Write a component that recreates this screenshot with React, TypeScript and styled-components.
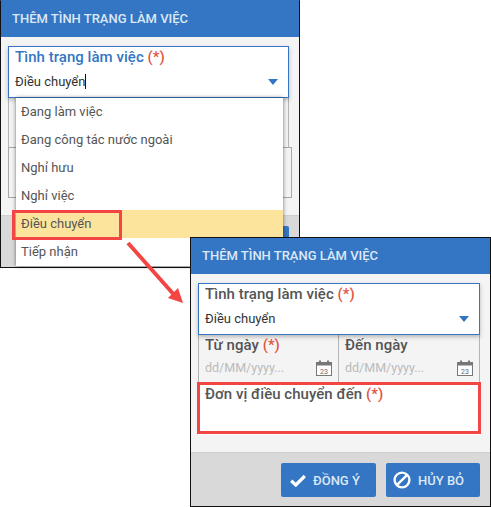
import * as React from 'react'
import styled, { createGlobalStyle } from 'styled-components'

const GlobalStyle = createGlobalStyle`
  html, body {
    margin: 0;
    padding: 0;
    background: #fff;
  }
  body {
    font-family: Roboto, "Liberation Sans", sans-serif;
  }
`

const Canvas = styled.div`
  position: relative;
  width: 491px;
  height: 507px;
  overflow: hidden;
  background: #fff;
`

const Window = styled.div<{ $left: number; $top: number; $w: number; $h: number; $flushTop?: boolean }>`
  position: absolute;
  left: ${(p) => p.$left}px;
  top: ${(p) => p.$top}px;
  width: ${(p) => p.$w}px;
  height: ${(p) => p.$h}px;
  box-sizing: border-box;
  border: 1px solid #111;
  border-top-color: ${(p) => (p.$flushTop ? '#3476c3' : '#111')};
  background: #f4f4f4;
  display: flex;
  flex-direction: column;
  overflow: hidden;
`

const TitleBar = styled.div`
  flex: none;
  height: 36px;
  background: #3476c3;
  color: #dce8f6;
  font-size: 13px;
  font-weight: 500;
  line-height: 36px;
  padding-left: 11px;
`

const Body = styled.div`
  flex: none;
  height: 178px;
  box-sizing: border-box;
  padding: 9px 10px 0 7px;
`

const Footer = styled.div`
  flex: 1;
  box-sizing: border-box;
  background: #d9d9d9;
  border-top: 1px solid #cfcfcf;
  display: flex;
  justify-content: flex-end;
  align-items: flex-start;
  gap: 10px;
  padding: 10px 10px 0 0;
`

const SelectBox = styled.div`
  position: relative;
  box-sizing: border-box;
  height: 52px;
  background: #fff;
  border: 1px solid #3476c3;
  padding: 2px 6px 0;
  box-shadow: 0 2px 4px rgba(0, 0, 0, 0.25);
`

const FieldLabel = styled.div<{ $active?: boolean }>`
  font-size: 15px;
  font-weight: 500;
  line-height: 17px;
  letter-spacing: 0.04px;
  color: ${(p) => (p.$active ? '#3476c3' : '#555')};
`

const Required = styled.span`
  color: #e2543f;
`

const SelectValue = styled.div`
  display: flex;
  align-items: center;
  justify-content: space-between;
  font-size: 13px;
  color: #333;
  margin-top: 8px;
  line-height: 16px;
  padding-right: 4px;
`

const Caret = styled.span`
  display: block;
  width: 0;
  height: 0;
  border-left: 5px solid transparent;
  border-right: 5px solid transparent;
  border-top: 6px solid #3476c3;
`

const TextCursor = styled.span`
  display: inline-block;
  width: 1px;
  height: 15px;
  background: #111;
  vertical-align: -3px;
`

const DateRow = styled.div`
  display: grid;
  grid-template-columns: 140px 1fr;
  height: 49px;
  box-sizing: border-box;
  border-left: 1px solid #b4b4b4;
  border-right: 1px solid #b4b4b4;
`

const DateField = styled.div<{ $divider?: boolean }>`
  padding: 2px 6px 0;
  border-right: ${(p) => (p.$divider ? '1px solid #b4b4b4' : 'none')};
`

const DateInput = styled.div`
  display: flex;
  align-items: center;
  justify-content: space-between;
  margin-top: 6px;
  font-size: 12.5px;
  line-height: 16px;
  color: #bbb;
`

const TargetField = styled.div`
  position: relative;
  box-sizing: border-box;
  height: 51px;
  margin-right: -3px;
  padding: 1px 6px 0;
  border: 1px solid #a8a8a8;
  background: #f4f4f4;
`

const TargetSurface = styled(TargetField)`
  margin-right: -1px;
  border-color: transparent;
  background: #fff;
`

const TargetMark = styled.div`
  position: absolute;
  left: -2px;
  right: -1px;
  top: -3px;
  bottom: 0;
  border: 3px solid #f44545;
`

const ActionButton = styled.button`
  height: 34px;
  border: none;
  border-radius: 2px;
  background: #3476c3;
  color: #dce8f6;
  font-family: inherit;
  font-size: 13px;
  font-weight: 500;
  display: flex;
  align-items: center;
  gap: 7px;
`

const ConfirmButton = styled(ActionButton)`
  width: 95px;
  padding: 0 0 0 9px;
`

const CancelButton = styled(ActionButton)`
  width: 94px;
  padding: 0 0 0 7px;
`

const DropdownList = styled.ul`
  position: absolute;
  left: 16px;
  top: 98px;
  width: 267px;
  margin: 0;
  padding: 0;
  list-style: none;
  background: #fff;
  box-shadow: 0 0 4px rgba(0, 0, 0, 0.55);
`

const DropdownItem = styled.li<{ $selected?: boolean }>`
  height: 28px;
  line-height: 28px;
  padding-left: 5px;
  font-size: 13px;
  color: #555;
  background: ${(p) => (p.$selected ? '#fde49d' : 'transparent')};
`

const CalloutBox = styled.div`
  position: absolute;
  left: 12px;
  top: 210px;
  width: 110px;
  height: 30px;
  box-sizing: border-box;
  border: 3px solid #f44545;
`

const ArrowOverlay = styled.svg`
  position: absolute;
  left: 120px;
  top: 235px;
`

const CalendarIcon = () => (
  <svg width="16" height="16" viewBox="0 0 16 16" fill="none">
    <rect x="0.5" y="2.5" width="15" height="13" fill="#fff" stroke="#777" />
    <rect x="0.5" y="2.5" width="15" height="3" fill="#777" />
    <rect x="3" y="0.5" width="2" height="3" fill="#777" />
    <rect x="11" y="0.5" width="2" height="3" fill="#777" />
    <text x="8" y="13.5" fontSize="7" textAnchor="middle" fill="#666" fontFamily="Roboto, sans-serif">23</text>
  </svg>
)

const CheckIcon = () => (
  <svg width="16" height="13" viewBox="0 0 16 13">
    <path d="M1.2 6.8 L5.8 11 L14.8 2" fill="none" stroke="#fff" strokeWidth="3.2" />
  </svg>
)

const BanIcon = () => (
  <svg width="18" height="18" viewBox="0 0 18 18">
    <circle cx="9" cy="9" r="7.4" fill="none" stroke="#fff" strokeWidth="2.4" />
    <path d="M14.2 3.8 L3.8 14.2" stroke="#fff" strokeWidth="2.4" />
  </svg>
)

const options = ['Đang làm việc', 'Đang công tác nước ngoài', 'Nghỉ hưu', 'Nghỉ việc', 'Điều chuyển', 'Tiếp nhận']

const App: React.FC = () => (
  <Canvas>
    <GlobalStyle />
    {/* the fields behind the open list only show their borders */}
    <Window $left={0} $top={0} $w={300} $h={268} $flushTop>
      <TitleBar>THÊM TÌNH TRẠNG LÀM VIỆC</TitleBar>
      <Body>
        <SelectBox>
          <FieldLabel $active>
            Tình trạng làm việc <Required>(*)</Required>
          </FieldLabel>
          <SelectValue>
            <span>
              Điều chuyển
              <TextCursor />
            </span>
            <Caret />
          </SelectValue>
        </SelectBox>
        <DateRow />
        <TargetField />
      </Body>
      <Footer>
        <CancelButton />
      </Footer>
    </Window>
    <DropdownList>
      {options.map((o) => (
        <DropdownItem key={o} $selected={o === 'Điều chuyển'}>
          {o}
        </DropdownItem>
      ))}
    </DropdownList>
    <CalloutBox />
    <Window $left={190} $top={237} $w={301} $h={270}>
      <TitleBar>THÊM TÌNH TRẠNG LÀM VIỆC</TitleBar>
      <Body>
        <SelectBox>
          <FieldLabel>
            Tình trạng làm việc <Required>(*)</Required>
          </FieldLabel>
          <SelectValue>
            <span>Điều chuyển</span>
            <Caret />
          </SelectValue>
        </SelectBox>
        <DateRow>
          <DateField $divider>
            <FieldLabel>
              Từ ngày <Required>(*)</Required>
            </FieldLabel>
            <DateInput>
              dd/MM/yyyy...
              <CalendarIcon />
            </DateInput>
          </DateField>
          <DateField>
            <FieldLabel>Đến ngày</FieldLabel>
            <DateInput>
              dd/MM/yyyy...
              <CalendarIcon />
            </DateInput>
          </DateField>
        </DateRow>
        <TargetSurface>
          <FieldLabel>
            Đơn vị điều chuyển đến <Required>(*)</Required>
          </FieldLabel>
          <TargetMark />
        </TargetSurface>
      </Body>
      <Footer>
        <ConfirmButton>
          <CheckIcon />
          ĐỒNG Ý
        </ConfirmButton>
        <CancelButton>
          <BanIcon />
          HỦY BỎ
        </CancelButton>
      </Footer>
    </Window>
    <ArrowOverlay width="70" height="72" viewBox="0 0 70 72">
      <path d="M8 8 L56 62" stroke="#f44545" strokeWidth="4" />
      <path d="M63 68 L48 63 L58 53 Z" fill="#f44545" />
    </ArrowOverlay>
  </Canvas>
)

export default App
